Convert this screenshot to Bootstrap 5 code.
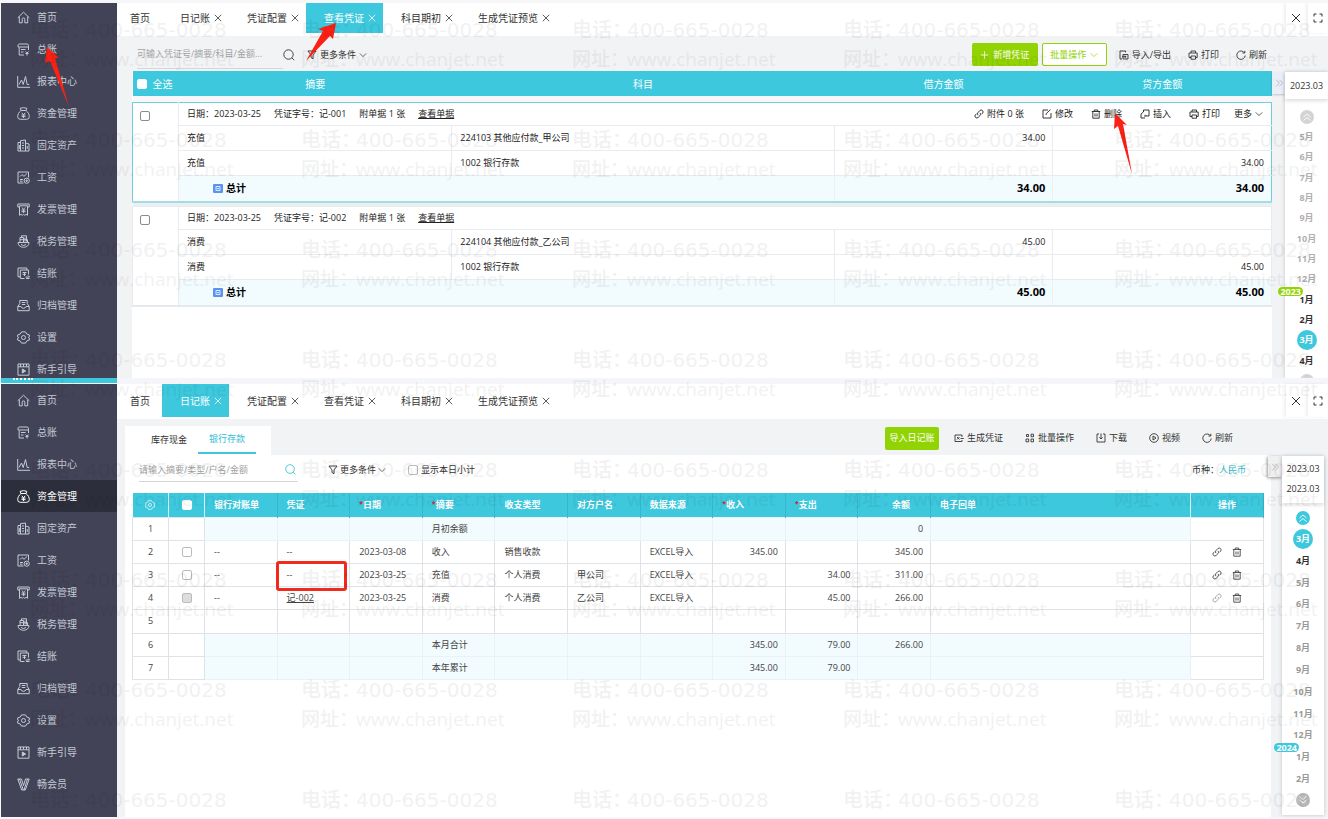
<!DOCTYPE html>
<html lang="zh-CN">
<head>
<meta charset="utf-8">
<meta name="viewport" content="width=device-width, initial-scale=1">
<title>凭证与日记账</title>
<link href="https://cdn.jsdelivr.net/npm/bootstrap@5.3.0/dist/css/bootstrap.min.css" rel="stylesheet">
<style>
:root{--cy:#3dc8dd;--ink:#333;--gr:#f2f3f5;--line:#dfe3e8;--pale:#f2fbfe;--go:#92d304}
body{font:9px/12px "Open Sans","Noto Sans CJK SC",sans-serif;color:var(--ink);background:#f7f7f9}
button,input,select{font:inherit;color:inherit}
button{background:none;border:0;padding:0;white-space:nowrap}
svg{display:block;flex:none}
.ic{width:10px;height:10px;fill:none;stroke:currentColor;stroke-width:.9}
.screen{display:grid;grid-template-rows:375px 6px 1fr;min-height:100vh;padding:3px 0 2px 1px}
.pane{min-height:0}
.pane-top{height:375px}
.pane-top>aside,.pane-top>main{overflow:hidden}
.side-nav{width:116px;flex:none;background:#434357}
.side-nav ul{font-size:10px}
.pane-top .side-nav ul{margin-top:-2px}
.side-nav a{height:32px;padding-left:16px;gap:7px;color:#c3cbd5;text-decoration:none}
.side-nav a.on{background:#2c2e3b;color:#fff}
.side-nav .ic{width:13px;height:13px;stroke-width:1}
.seam{background:#f5f6fb}
.seam i{width:116px;background:var(--cy);display:block;height:5px}
.seam i::before{content:"";display:block;width:20px;margin-left:12px;border-top:2px dotted #fff}
.tabbar{background:#fff;height:33px;font-size:10px}
.pane-low .tabbar{height:35px}
.tabbar .tab{position:relative;height:30px;padding:0 7px 0 18px;gap:4px}
.pane-low .tabbar .tab{height:33px}
.tabbar .tab .ic,.winbtn .ic{width:8px;height:8px;stroke-width:1}
.tabbar .tab.first{padding:0 12px 0 13px}
.tab.on{background:var(--cy);color:#fff}
.winbtn{width:20px;height:30px;box-shadow:-2px 0 3px #0001}
.pane-low .winbtn{height:33px}
.winbtn .ic{width:10px;height:10px}
.find{border-bottom:1px solid #d4d6da}
.find input{border:0;background:none;outline:0;padding:0;min-width:0;flex:1}
.find input::placeholder{color:#a3a3a3;opacity:1}
.btn-go{height:23px;border-radius:2px;background:var(--go);color:#fff}
.btn-line{height:23px;border-radius:2px;border:1px solid var(--go);color:var(--go);background:#fff}
.tick{width:10px;height:10px;margin:0!important;border:1px solid #8b8b8b;border-radius:2px!important;flex:none;background-color:#fff}
.tick.soft{border-color:#bbb}
.tick.white{border-color:#fff}
.tick:disabled{background-color:#ddd;opacity:1}
.tool{gap:3px}
/* vouchers */
.vouch{table-layout:fixed;width:100%;border-collapse:collapse;background:#fff;color:#222}
.vouch th{background:var(--cy);color:#fff;height:25px;font-size:10px;font-weight:400;text-align:center;padding:0}
.vouch td{padding:0 8px;height:25px;border:1px solid #e8ecf1}
.vouch .hd td{height:23px}
.vouch .pick{vertical-align:top;padding:8px 7px 0}
.vouch .gap td{height:4px;border:0;background:#eaeff1;padding:0}
.vouch .gap.tall td{height:6px;background:#f6f7f8}
.vouch .sum td{height:27px;background:#f2fbfe;font-weight:700;font-size:11px;color:#000;border-right-color:#e8f2f5}
.vouch .sum td:first-child{font-size:10px}
.vouch .num{text-align:right;padding-right:7px}
.vouch .cur .hd td{border-top-color:#6fd0dc}
.vouch .cur .pick{border-left-color:#6fd0dc}
.vouch .cur tr td:last-child{border-right-color:#6fd0dc}
.vouch .cur .sum td,.vouch .cur .pick{border-bottom:2px solid #a5dbe2}
.vouch .rest .sum td,.vouch .rest .pick{border-bottom:2px solid #e5e9ed}
/* ledger */
.ledger{table-layout:fixed;width:100%;height:187px;border-collapse:collapse;color:#444}
.ledger th{background:var(--cy);color:#fff;height:24px;padding:0 9px;border-right:1px solid #37b6cb}
.ledger td{padding:0 9px;border:1px solid var(--line);white-space:nowrap}
.ledger .mid{text-align:center;padding:0}
.ledger .num{text-align:right;padding-right:7px}
.ledger th.num{padding-right:20px}
.ledger th:nth-child(1),.ledger th:nth-child(2),.ledger th:nth-child(13){border-right-color:#d9f3f7}
.ledger .flat td{background:#f2fbfe;border-color:#e9f2f5}
.ledger .flat td.plain{background:#fff;border-color:var(--line)}
.ledger .tick{display:block;margin:0 auto!important}
.req{color:#d22;font-size:7px;vertical-align:2px}
.boxed{position:relative}
.boxed::after{content:"";position:absolute;inset:-3px 2px -5px -2px;border:3px solid #f02a1c;border-radius:3px}
/* month rail */
.fold{width:13px;height:22px;background:#e9eef8;color:#aaa;box-shadow:0 1px 2px #0003}
.rail{background:#fff;box-shadow:0 0 4px #0003;position:relative}
.rail .when{box-shadow:0 2px 4px #0002;height:27px}
.months{flex:1;font-weight:700;color:#b0b0b0}
.months button{flex:1;position:relative;font-weight:700;display:flex;align-items:center;justify-content:center;min-height:0}
.months .dark{color:#333}
.months .cur span{width:20px;height:20px;border-radius:50%;background:var(--cy);color:#fff;display:flex;align-items:center;justify-content:center}
.yr{position:absolute;right:25px;top:-3px;height:9px;line-height:9px;border-radius:5px;padding:0 2px;background:var(--go);color:#fff}
.pane-low .yr{background:var(--cy)}
.pane-low .months{color:#999}
.knob{width:14px;height:14px;border-radius:50%;background:#d3d3d3;color:#fff;flex:none;align-self:center;display:flex;align-items:center;justify-content:center}
.pane-low .fold{width:14px;background:#f0f0f0;height:21px;box-shadow:-1px 1px 3px #0006}
.subtabs{background:#fff;height:29px;width:146px;padding:0 15px 0 15px}
.subtabs button{width:58px;height:28px}
.subtabs .on{color:#30bdd3;border-bottom:2px solid var(--cy)}
/* pointers */
.ptr{position:absolute;fill:#fb2114;z-index:3;pointer-events:none}
.wm-clip{position:absolute;inset:0;overflow:hidden;pointer-events:none;z-index:5}
.wm{display:grid;grid-template-columns:repeat(5,271px);grid-auto-rows:110px;color:#000;opacity:.05;padding:16px 0 0 30px}
.wm p{margin:0;font-size:19px;line-height:29px;white-space:nowrap;display:flex}
.wm b{font-weight:500;width:55px}
.wm .tel{font-family:"DejaVu Sans","Noto Sans CJK SC",sans-serif;font-size:20px}
</style>
<script src="https://cdn.jsdelivr.net/npm/bootstrap@5.3.0/dist/js/bootstrap.bundle.min.js"></script>
</head>
<body>
<svg width="0" height="0" class="position-absolute" aria-hidden="true">
<symbol id="home" viewBox="0 0 13 13"><path d="M.7 6.8 6.5 1.2l5.8 5.6M2.3 5.6v6.2h2.9V8.2a1.3 1.3 0 0 1 2.6 0v3.6h2.900V5.600"/></symbol>
<symbol id="book" viewBox="0 0 13 13"><path d="M7 12H2.2V4.500M11.500 7V2.500q0-1.500-1.500-1.500H2.500Q1 1 1 2.500V4h10.500M4 6.500h4.500M4 9h2.500M8.500 8.500l1.500 1.700 1.500-1.700M8.500 10.500h3M10 10.500v2"/></symbol>
<symbol id="chart" viewBox="0 0 13 13"><path d="M.7 1v11.300H13M2 9.500 4.500 5l1.700 4.500L8.500 1.500l1.700 8h2"/></symbol>
<symbol id="purse" viewBox="0 0 13 13"><path d="M4 3.500h5C11.500 5.500 12.300 7.800 12.300 9.500q0 2.800-2.500 2.800H3.200Q.7 12.300.7 9.500C.7 7.800 1.500 5.500 4 3.500L3.200 1.300Q6.500 0 9.800 1.300L9 3.500M4.800 5.800l1.700 2 1.700-2M4.500 8h4M4.500 9.600h4M6.500 8v3"/></symbol>
<symbol id="asset" viewBox="0 0 13 13"><path d="M3.500 12V1.700L8.500 1v11M3.500 3.500H1V12h11V5L8.500 4M5 4h2M5 6.500h2M5 9h2M10.200 7v3M2.300 6v4"/></symbol>
<symbol id="wage" viewBox="0 0 13 13"><path d="M6.500 12H1V1h10.500v5.500M3 5.500 5 3.500l2 1.800 3-2.800M3 8.500h3M3 10.200h2.500"/><circle cx="9.700" cy="9.700" r="2.600"/><path d="M8.500 9.700h2.400M9.700 8.500v2.500"/></symbol>
<symbol id="bill" viewBox="0 0 13 13"><path d="M2.500 4H.8V1h11.400v3h-1.700M2.500 2.800v9.500l1.400-1 1.300 1 1.300-1 1.300 1 1.300-1 1.400 1V2.800h-8M4.800 4.500l1.700 1.700 1.700-1.700M4.500 7h4M4.500 8.700h4M6.500 6.500v3.300"/></symbol>
<symbol id="tax" viewBox="0 0 13 13"><path d="M1 7.500h11c0 3-2.500 4.800-5.500 4.800S1 10.500 1 7.500zM3 7V2.500h3.500V7M4.500 2V.8H9.500V6.500M3 4.700h7.500V7M4 9.500q2.500 2 5 0M8 2.500v4"/></symbol>
<symbol id="close" viewBox="0 0 13 13"><path d="M7.500 11.500H3.300V3h8.200v4.500M3.300 9.800H1V1h8.800v2M5.500 5.500h4M7.500 5.500v3.500M5.500 7.300H9M8.500 10h4l-1.300-1.500M12.500 11.500h-3.500"/></symbol>
<symbol id="file" viewBox="0 0 13 13"><path d="M.8 7.500v4.200h11.400V7.500M.8 7.500 2.800 4.500V1.500h7.400v3l2 3H9q-.5 1.800-2.500 1.800T4 7.500zM4.800 3.500h3.500M4.800 5.500h3.500"/></symbol>
<symbol id="gear" viewBox="0 0 13 13"><path d="M4.500.9h4l1.300 2.200 2.500.8v2l-1 .6 1 .6v2l-2.500.8-1.300 2.200h-4L3.200 9.900.7 9.100v-2l1-.6-1-.6v-2l2.500-.8z"/><circle cx="6.500" cy="6.500" r="2"/></symbol>
<symbol id="guide" viewBox="0 0 13 13"><path d="M1 3.800h11v8.400H1zM1 3.800V1h11v2.800M3.500 1v2.500M6.500 1v2.500M9.500 1v2.500"/><path d="M5.300 6v4l3.400-2z" fill="currentColor"/></symbol>
<symbol id="vip" viewBox="0 0 13 13"><path d="M.8 1h3.700l2 6.500 2-6.500h3.700L8.300 12H4.700zM2.500 1l3.800 11M10.500 1 7 12"/></symbol>
<symbol id="x" viewBox="0 0 10 10"><path d="m1 1 8 8M9 1 1 9"/></symbol>
<symbol id="full" viewBox="0 0 10 10"><path d="M3.500 1H1v2.500M6.500 1H9v2.500M3.500 9H1V6.500M6.500 9H9V6.500"/></symbol>
<symbol id="lens" viewBox="0 0 12 12"><circle cx="5.500" cy="5.500" r="4.700"/><path d="m8.800 8.800 2.400 2.400"/></symbol>
<symbol id="funnel" viewBox="0 0 10 10"><path d="M1 1h8L6 5v3.800L4 7.500V5z"/></symbol>
<symbol id="down" viewBox="0 0 10 10"><path d="m1 3 4 4 4-4"/></symbol>
<symbol id="plus" viewBox="0 0 10 10"><path d="M5 1v8M1 5h8"/></symbol>
<symbol id="io" viewBox="0 0 10 10"><path d="M6.500 2.500V1H1v8h2M4 4.500h5V9H4zM3 6.700h4M5.700 5.500 7 6.700 5.700 8"/></symbol>
<symbol id="print" viewBox="0 0 10 10"><path d="M3 3V1h4.500v2M3 7.500H1V3h8.200v4.500H7.500M3 6h4.500v3.200H3z"/></symbol>
<symbol id="redo" viewBox="0 0 10 10"><path d="M8.600 3A4.200 4.200 0 1 0 9.200 5.500M8.800.8V3H6.500"/></symbol>
<symbol id="link" viewBox="0 0 10 10"><path d="M4 6.200a2 2 0 0 1 0-2.700l1.800-1.900a1.800 1.800 0 0 1 2.700 2.700l-1 1M6 3.900a2 2 0 0 1 0 2.700L4.200 8.400a1.800 1.800 0 0 1-2.700-2.700l1-1"/></symbol>
<symbol id="edit" viewBox="0 0 10 10"><path d="M6 1H1v8h8V4M4 6l.3-1.500L8.500.6"/></symbol>
<symbol id="bin" viewBox="0 0 10 10"><path d="M.8 2.500h8.400M3.300 2.500V1h3.400v1.500M1.800 2.500v6.700h6.400V2.500M4 4.500V7.500M6 4.500v3"/></symbol>
<symbol id="insert" viewBox="0 0 10 10"><path d="M3.500 3V1H9v6H6.500M3.500 2.800 1 5v4h4M4 7h2.500L5.500 5.800"/></symbol>
<symbol id="gen" viewBox="0 0 10 10"><path d="M8 4V2H1v6.500h7V7M3 4l2.500 2.500M5.500 4 3 6.500M6.500 5.500H9.800"/></symbol>
<symbol id="batch" viewBox="0 0 10 10"><path d="M1.500 1.500h2v2h-2zM6 1.200h2.500v2.500H6zM1 6h2.700v2.800H1zM6 6h2.500v2.800H6z"/></symbol>
<symbol id="save" viewBox="0 0 10 10"><path d="M3 1H1v8h8V1H7M5 .5V6M3.300 4.300 5 6l1.700-1.700"/></symbol>
<symbol id="play" viewBox="0 0 10 10"><circle cx="5" cy="5" r="4.300"/><path d="M4 3v4l3-2z"/></symbol>
<symbol id="fwd" viewBox="0 0 10 10"><path d="m1.500 1 4 4-4 4M5.500 1l4 4-4 4"/></symbol>
<symbol id="upup" viewBox="0 0 10 10"><path d="m1.500 5 3.500-3 3.500 3M1.500 8.500 5 5.500l3.500 3"/></symbol>
<symbol id="dndn" viewBox="0 0 10 10"><path d="M1.500 5 5 8l3.500-3M1.500 1.500l3.500 3 3.500-3"/></symbol>
</svg>

<div class="screen position-relative">
  <section class="pane pane-top d-flex">
    <aside class="side-nav"><ul class="list-unstyled mb-0" data-nav="12" data-on="-1"></ul></aside>
    <main class="flex-grow-1 d-flex flex-column" style="min-width:0">
      <div class="tabbar d-flex" data-tabs="3"></div>
      <div class="d-flex flex-grow-1" style="min-height:0;background:var(--gr)">
        <div class="flex-grow-1 d-flex flex-column" style="min-width:0;margin-left:15px">
          <div class="d-flex align-items-center" style="height:35px;padding-top:2px">
            <div class="find d-flex" style="margin-left:5px;width:146px;height:28px"><input aria-label="搜索凭证" placeholder="可输入凭证号/摘要/科目/金额..."></div>
            <button aria-label="搜索"><svg class="ic" style="width:12px;height:12px"><use href="#lens"/></svg></button>
            <button class="tool d-flex align-items-center ms-2"><svg class="ic ms-1"><use href="#funnel"/></svg>更多条件<svg class="ic" style="width:8px"><use href="#down"/></svg></button>
            <div class="ms-auto d-flex align-items-center" style="padding-right:5px">
              <button class="btn-go d-flex align-items-center justify-content-center gap-1" style="width:66px"><svg class="ic" style="width:9px"><use href="#plus"/></svg>新增凭证</button>
              <button class="btn-line d-flex align-items-center justify-content-center gap-1 ms-1" style="width:65px">批量操作<svg class="ic" style="width:8px"><use href="#down"/></svg></button>
              <button class="tool d-flex align-items-center" style="margin-left:12px"><svg class="ic"><use href="#io"/></svg>导入/导出</button>
              <button class="tool d-flex align-items-center" style="margin-left:17px"><svg class="ic"><use href="#print"/></svg>打印</button>
              <button class="tool d-flex align-items-center" style="margin-left:17px"><svg class="ic"><use href="#redo"/></svg>刷新</button>
            </div>
          </div>
          <table class="vouch">
            <colgroup><col style="width:46px"><col style="width:24%"><col><col style="width:19.2%"><col style="width:19.2%"></colgroup>
            <thead><tr><th><label class="d-flex align-items-center ps-1"><input type="checkbox" class="form-check-input tick white"><span style="margin-left:6px;white-space:nowrap">全选</span></label></th><th>摘要</th><th>科目</th><th>借方金额</th><th>贷方金额</th></tr></thead>
            <tbody class="gap tall"><tr><td colspan="5"></td></tr></tbody>
            <tbody class="cur">
              <tr class="hd"><td class="pick" rowspan="4"><input type="checkbox" class="form-check-input tick" aria-label="选择记-001"></td>
                <td colspan="4"><div class="d-flex align-items-center">
                  <span>日期：2023-03-25</span><span style="margin-left:13px">凭证字号：记-001</span><span style="margin-left:13px">附单据 1 张</span><a href="#" class="text-reset" style="margin-left:13px">查看单据</a>
                  <div class="ms-auto d-flex align-items-center" style="gap:18px">
                    <button class="tool d-flex align-items-center"><svg class="ic"><use href="#link"/></svg>附件 0 张</button>
                    <button class="tool d-flex align-items-center"><svg class="ic"><use href="#edit"/></svg>修改</button>
                    <button class="tool d-flex align-items-center position-relative"><svg class="ic"><use href="#bin"/></svg>删除<svg class="ptr" style="left:23px;top:5px" width="24" height="62" viewBox="0 0 24 62"><path d="M1 0 13 12l-4-1 9 50L4 13l-4 3z"/></svg></button>
                    <button class="tool d-flex align-items-center"><svg class="ic"><use href="#insert"/></svg>插入</button>
                    <button class="tool d-flex align-items-center"><svg class="ic"><use href="#print"/></svg>打印</button>
                    <button class="tool d-flex align-items-center" style="margin-left:-4px">更多<svg class="ic" style="width:8px"><use href="#down"/></svg></button>
                  </div></div></td></tr>
              <tr><td>充值</td><td>224103 其他应付款_甲公司</td><td class="num">34.00</td><td></td></tr>
              <tr><td>充值</td><td>1002 银行存款</td><td></td><td class="num">34.00</td></tr>
              <tr class="sum"><td colspan="2"><span class="d-flex align-items-center" style="padding-left:26px;gap:3px"><svg width="10" height="10"><rect y="1" width="10" height="9" rx="1" fill="#5b93f0"/><path d="M3 3.500h4v4H3zM4 5.500h2" fill="none" stroke="#dbe8ff"/></svg>总计</span></td><td class="num">34.00</td><td class="num">34.00</td></tr>
            </tbody>
            <tbody class="gap"><tr><td colspan="5"></td></tr></tbody>
            <tbody class="rest">
              <tr class="hd"><td class="pick" rowspan="4"><input type="checkbox" class="form-check-input tick" aria-label="选择记-002"></td>
                <td colspan="4"><div class="d-flex align-items-center"><span>日期：2023-03-25</span><span style="margin-left:13px">凭证字号：记-002</span><span style="margin-left:13px">附单据 1 张</span><a href="#" class="text-reset" style="margin-left:13px">查看单据</a></div></td></tr>
              <tr><td>消费</td><td>224104 其他应付款_乙公司</td><td class="num">45.00</td><td></td></tr>
              <tr><td>消费</td><td>1002 银行存款</td><td></td><td class="num">45.00</td></tr>
              <tr class="sum"><td colspan="2"><span class="d-flex align-items-center" style="padding-left:26px;gap:3px"><svg width="10" height="10"><rect y="1" width="10" height="9" rx="1" fill="#5b93f0"/><path d="M3 3.500h4v4H3zM4 5.500h2" fill="none" stroke="#dbe8ff"/></svg>总计</span></td><td class="num">45.00</td><td class="num">45.00</td></tr>
            </tbody>
          </table>
          <div class="flex-grow-1 bg-white"></div>
        </div>
        <div class="d-flex align-items-start" style="padding-top:36px">
          <button class="fold d-flex align-items-center justify-content-center" aria-label="收起"><svg class="ic" style="width:8px;height:8px"><use href="#fwd"/></svg></button>
          <div class="rail d-flex flex-column align-self-stretch" style="width:43px">
            <div class="when d-flex align-items-center justify-content-center">2023.03</div>
            <button class="knob" style="margin-top:11px;margin-bottom:3px" aria-label="向上"><svg class="ic"><use href="#upup"/></svg></button>
            <div class="months d-flex flex-column" data-months="5,6,7,8,9,10,11,12,1,2,3,4" data-cur="10" data-dark="8" data-year="2023"></div>
            <button class="knob" style="margin-top:3px;margin-bottom:-10px" aria-label="向下"><svg class="ic"><use href="#dndn"/></svg></button>
          </div>
        </div>
      </div>
    </main>
  </section>
  <div class="seam"><i></i></div>
  <section class="pane pane-low d-flex">
    <aside class="side-nav"><ul class="list-unstyled mb-0" data-nav="13" data-on="3"></ul></aside>
    <main class="flex-grow-1 d-flex flex-column" style="min-width:0;background:var(--gr)">
      <div class="tabbar d-flex" data-tabs="1"></div>
      <div class="d-flex align-items-end" style="height:36px;padding-left:8px">
        <div class="subtabs d-flex"><button>库存现金</button><button class="on">银行存款</button></div>
        <div class="ms-auto d-flex align-items-center align-self-center" style="gap:22px;padding:2px 95px 0 0">
          <button class="btn-go" style="width:54px;margin-right:-7px">导入日记账</button>
          <button class="tool d-flex align-items-center"><svg class="ic"><use href="#gen"/></svg>生成凭证</button>
          <button class="tool d-flex align-items-center"><svg class="ic"><use href="#batch"/></svg>批量操作</button>
          <button class="tool d-flex align-items-center"><svg class="ic"><use href="#save"/></svg>下载</button>
          <button class="tool d-flex align-items-center"><svg class="ic"><use href="#play"/></svg>视频</button>
          <button class="tool d-flex align-items-center"><svg class="ic"><use href="#redo"/></svg>刷新</button>
        </div>
      </div>
      <div class="d-flex flex-grow-1">
        <div class="flex-grow-1 bg-white" style="min-width:0;margin-left:8px;padding:0 7px">
          <div class="d-flex align-items-center" style="height:30px;margin-bottom:8px">
            <div class="find d-flex align-items-center" style="margin-left:7px;width:159px;height:24px"><input aria-label="搜索日记账" placeholder="请输入摘要/类型/户名/金额"><button aria-label="搜索" style="color:#30bdd3;padding-right:2px"><svg class="ic" style="width:11px;height:11px"><use href="#lens"/></svg></button></div>
            <button class="tool d-flex align-items-center" style="margin-left:30px;gap:2px"><svg class="ic"><use href="#funnel"/></svg>更多条件<svg class="ic" style="width:8px"><use href="#down"/></svg></button>
            <label class="d-flex align-items-center" style="margin-left:22px;gap:3px"><input type="checkbox" class="form-check-input tick soft">显示本日小计</label>
            <div class="ms-auto d-flex" style="padding-right:18px"><span>币种：</span><a href="#" class="text-decoration-none" style="color:#30bdd3">人民币</a></div>
          </div>
          <table class="ledger">
            <colgroup><col style="width:36px"><col style="width:36px"><col span="10" style="width:6.42%"><col><col style="width:73px"></colgroup>
            <thead><tr><th class="mid"><svg class="ic mx-auto"><use href="#gear"/></svg></th><th class="mid"><input type="checkbox" class="form-check-input tick white" aria-label="全选"></th><th>银行对账单</th><th>凭证</th><th><span class="req">*</span>日期</th><th><span class="req">*</span>摘要</th><th>收支类型</th><th>对方户名</th><th>数据来源</th><th><span class="req">*</span>收入</th><th><span class="req">*</span>支出</th><th class="num">余额</th><th>电子回单</th><th class="mid">操作</th></tr></thead>
            <tbody id="rows"></tbody>
          </table>
        </div>
        <div class="d-flex align-items-start" style="margin-left:-3px;padding:1px 4px 2px 0">
          <button class="fold d-flex align-items-center justify-content-center" aria-label="收起"><svg class="ic" style="width:8px;height:8px"><use href="#fwd"/></svg></button>
          <div class="rail d-flex flex-column align-self-stretch" style="width:42px">
            <div class="when d-flex flex-column align-items-center" style="height:47px;padding-top:7px;gap:8px"><span>2023.03</span><span>2023.03</span></div>
            <button class="knob" style="margin-top:8px;margin-bottom:3px;background:var(--cy)" aria-label="向上"><svg class="ic"><use href="#upup"/></svg></button>
            <div class="months d-flex flex-column" data-months="3,4,5,6,7,8,9,10,11,12,1,2" data-cur="0" data-dark="1" data-darkend="2" data-year="2024"></div>
            <button class="knob" style="margin-top:3px;margin-bottom:8px;background:#bbb" aria-label="向下"><svg class="ic"><use href="#dndn"/></svg></button>
          </div>
        </div>
      </div>
    </main>
  </section>
  <div class="wm-clip" aria-hidden="true"><div class="wm" id="wm"></div></div>
</div>
<script>
const icon = n => `<svg class="ic"><use href="#${n}"/></svg>`;
const menu = [['home','首页'],['book','总账'],['chart','报表中心'],['purse','资金管理'],['asset','固定资产'],['wage','工资'],['bill','发票管理'],['tax','税务管理'],['close','结账'],['file','归档管理'],['gear','设置'],['guide','新手引导'],['vip','畅会员']];
document.querySelectorAll('[data-nav]').forEach(ul => {
  const top = ul.dataset.on === '-1';
  ul.innerHTML = menu.slice(0, +ul.dataset.nav).map(([i, t], k) =>
    `<li class="position-relative"><a href="#" class="d-flex align-items-center${k == ul.dataset.on ? ' on' : ''}">${icon(i)}${t}</a>${top && k === 1 ? '<svg class="ptr" style="left:44px;top:14px" width="26" height="62" viewBox="0 0 26 62"><path d="M2 0 14 11l-4 0 14 49L5 14 0 16z"/></svg>' : ''}</li>`).join('');
});
const tabs = ['首页','日记账','凭证配置','查看凭证','科目期初','生成凭证预览'];
document.querySelectorAll('[data-tabs]').forEach(bar => {
  bar.innerHTML = tabs.map((t, k) =>
    `<button class="tab d-flex align-items-center${k ? '' : ' first'}${k == bar.dataset.tabs ? ' on' : ''}">${t}${k ? icon('x') : ''}${k === 3 && bar.dataset.tabs === '3' ? '<svg class="ptr" style="left:0;top:20px" width="31" height="39" viewBox="0 0 31 39"><path d="M30 0 27 16l-3-3L0 38 17 8l-5-2z"/></svg>' : ''}</button>`).join('') +
    `<span class="ms-auto d-flex" style="gap:2px"><button class="winbtn d-flex align-items-center justify-content-center" aria-label="关闭">${icon('x')}</button><button class="winbtn d-flex align-items-center justify-content-center" aria-label="全屏">${icon('full')}</button></span>`;
});
document.querySelectorAll('[data-months]').forEach(m => {
  const d = m.dataset, end = +(d.darkend || 99);
  m.innerHTML = d.months.split(',').map((n, k) =>
    `<button class="${k == d.cur ? 'cur' : k >= d.dark && k < end ? 'dark' : ''}">${n === '1' ? `<i class="yr fst-normal">${d.year}</i>` : ''}<span>${n}月</span></button>`).join('');
});
const data = [
  ['flat','','','','','月初余额','','','','','','0'],
  ['','on','--','--','2023-03-08','收入','销售收款','','EXCEL导入','345.00','','345.00'],
  ['','on','--','!','2023-03-25','充值','个人消费','甲公司','EXCEL导入','','34.00','311.00'],
  ['','off','--','@','2023-03-25','消费','个人消费','乙公司','EXCEL导入','','45.00','266.00'],
  ['','','','','','','','','','','',''],
  ['flat','','','','','本月合计','','','','345.00','79.00','266.00'],
  ['flat','','','','','本年累计','','','','345.00','79.00','']];
document.getElementById('rows').innerHTML = data.map((r, i) => {
  const cells = r.slice(2).map((v, k) => v === '!' ? '<td class="boxed">--</td>' : v === '@' ? '<td><a href="#" class="text-reset">记-002</a></td>' : `<td${k > 6 ? ' class="num"' : ''}>${v}</td>`).join('');
  const box = r[1] ? `<input type="checkbox" class="form-check-input tick soft" aria-label="选择第${i + 1}行"${r[1] === 'off' ? ' disabled' : ''}>` : '';
  const ops = r[1] ? `<div class="d-flex justify-content-center" style="gap:10px"><button aria-label="关联"${r[1] === 'off' ? ' class="opacity-50"' : ''}>${icon('link')}</button><button aria-label="删除">${icon('bin')}</button></div>` : '';
  return `<tr class="${r[0]}"><td class="mid plain">${i + 1}</td><td class="mid plain">${box}</td>${cells}<td></td><td class="mid plain">${ops}</td></tr>`;
}).join('');
/* the last row of the watermark has room for its first line only */
const tel = '<p class="tel"><b>电话：</b>400-665-0028</p>', url = '<p><b>网址：</b>www.chanjet.net</p>';
document.getElementById('wm').innerHTML = `<div>${tel}${url}</div>`.repeat(35) + `<div>${tel}</div>`.repeat(5);
</script>
</body>
</html>
